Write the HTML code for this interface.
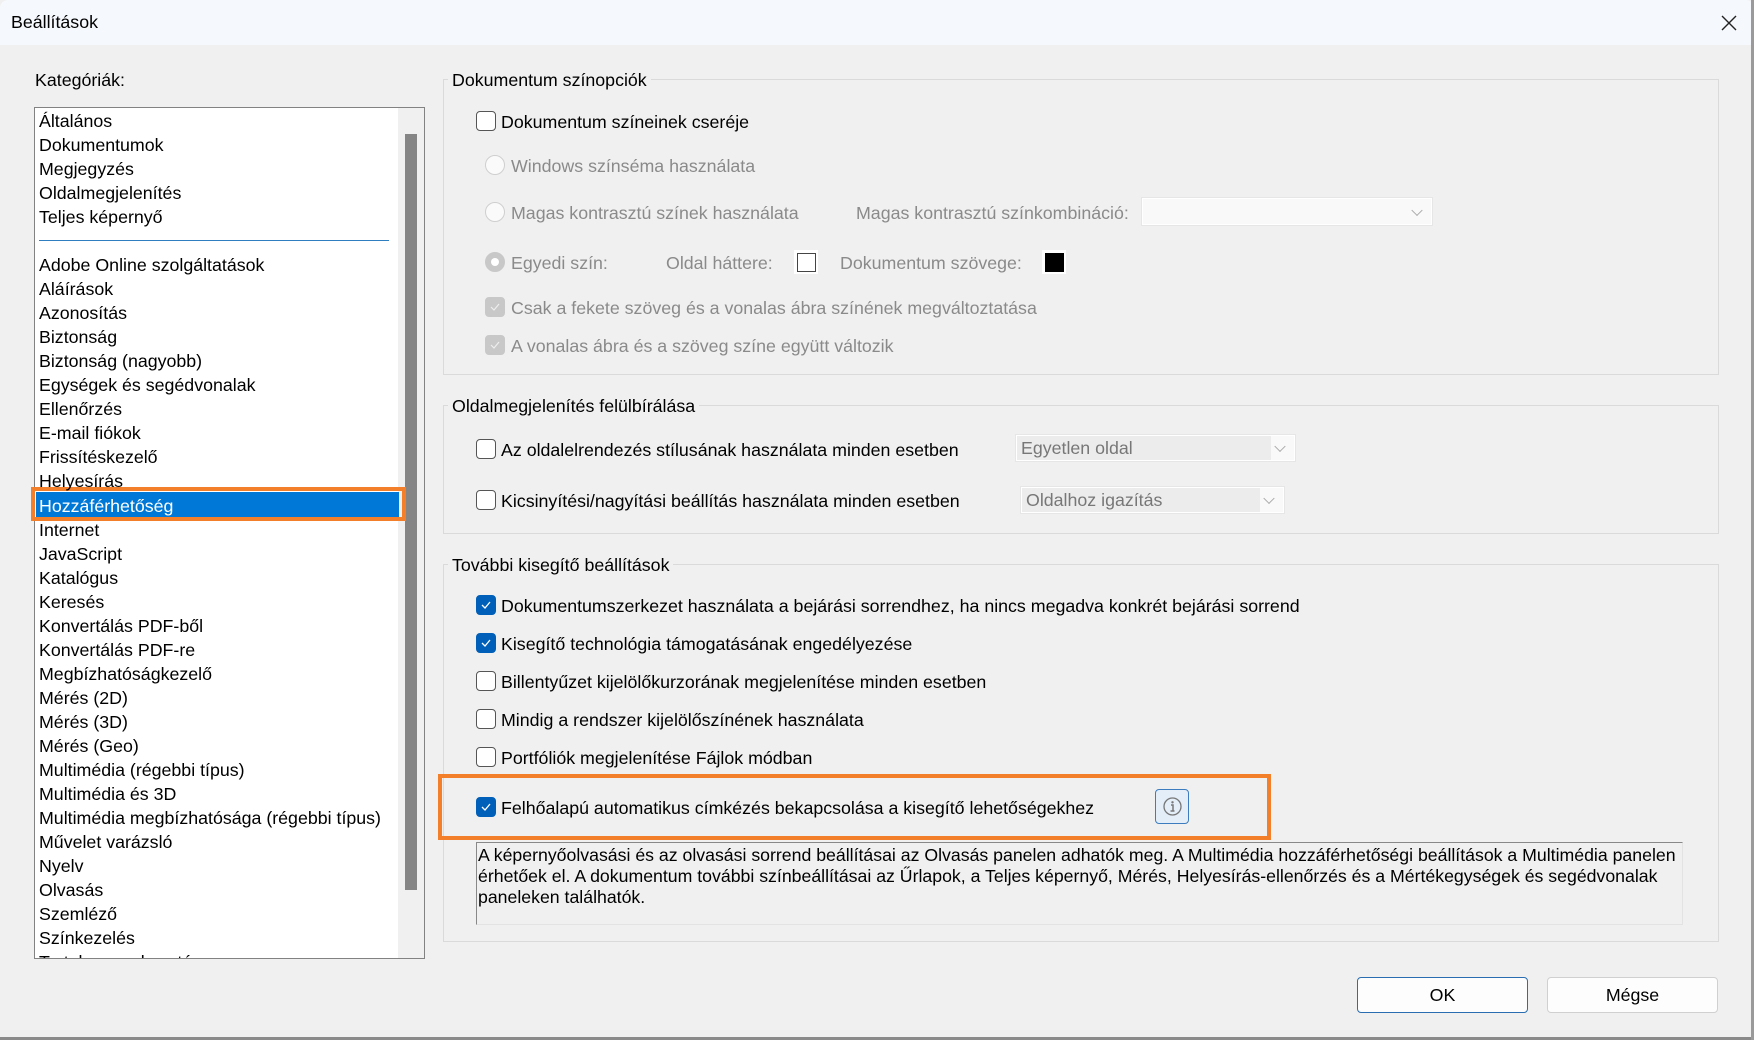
<!DOCTYPE html>
<html><head><meta charset="utf-8"><style>
*{margin:0;padding:0;box-sizing:border-box}
body{width:1754px;height:1040px;overflow:hidden;background:#f0f0f0;font-family:"Liberation Sans",sans-serif;font-size:17.8px;color:#000;position:relative}
.a{position:absolute;white-space:nowrap}
.t{position:absolute;white-space:nowrap;line-height:26px}
.g{color:#8a8a8a}
.cb{position:absolute;width:20px;height:20px;border:1px solid #555;border-radius:4px;background:#fff}
.cb.on{background:#005fb8;border-color:#005fb8}
.cb.dis{background:#c8c8c8;border-color:#c8c8c8}
.cb svg{position:absolute;left:3px;top:3px}
.rd{position:absolute;width:20px;height:20px;border:1px solid #cfcfcf;border-radius:50%;background:#fafafa}
.grp{position:absolute;border:1px solid #dadada}
.lbl{position:absolute;background:#f0f0f0;padding:0 4px;line-height:22px}
.dd{position:absolute;background:#f9f9f9;border:1px solid #fff;box-shadow:0 0 0 1px #e6e6e6}
.dd .ar{position:absolute;right:10px;top:50%;width:8px;height:8px;border-right:1px solid #aaa;border-bottom:1px solid #aaa;transform:translateY(-70%) rotate(45deg)}
.btn{position:absolute;background:#fdfdfd;border:1px solid #d0d0d0;border-radius:4px;text-align:center;line-height:34px}
</style></head><body>
<div class="a" style="left:0;top:0;width:1754px;height:45px;background:#f5f8fc;border-top-left-radius:8px;border-top-right-radius:8px"></div>
<div class="a" style="left:11px;top:12px;font-size:17.8px">Beállítások</div>
<svg class="a" style="left:1720px;top:14px" width="18" height="18"><path d="M2 2L16 16M16 2L2 16" stroke="#222" stroke-width="1.4"/></svg>

<div class="a" style="left:35px;top:70px">Kategóriák:</div>
<div class="a" style="left:34px;top:107px;width:391px;height:852px;background:#fff;border:1px solid #828282;overflow:hidden">
 <div class="a" style="left:363px;top:0;width:27px;height:852px;background:#f0f0f0"></div>
 <div class="a" style="left:370px;top:26px;width:12px;height:756px;background:#858585"></div>
 <div class="a" style="left:4px;top:132px;width:350px;height:1px;background:#2f7fc0"></div>
 <div class="a" style="left:1px;top:384px;width:363px;height:25px;background:#0078d7"></div>
</div>
<div class="a" style="left:31px;top:487px;width:375px;height:34px;border:4px solid #f47f2a"></div>
<div style="position:absolute;left:39px;top:108px">
<div class="t" style="top:0">Általános</div>
<div class="t" style="top:24px">Dokumentumok</div>
<div class="t" style="top:48px">Megjegyzés</div>
<div class="t" style="top:72px">Oldalmegjelenítés</div>
<div class="t" style="top:96px">Teljes képernyő</div>
</div>
<div style="position:absolute;left:39px;top:252px;width:360px;height:706px;overflow:hidden">
<div class="t" style="top:0">Adobe Online szolgáltatások</div>
<div class="t" style="top:24.05px">Aláírások</div>
<div class="t" style="top:48.1px">Azonosítás</div>
<div class="t" style="top:72.15px">Biztonság</div>
<div class="t" style="top:96.2px">Biztonság (nagyobb)</div>
<div class="t" style="top:120.25px">Egységek és segédvonalak</div>
<div class="t" style="top:144.3px">Ellenőrzés</div>
<div class="t" style="top:168.35px">E-mail fiókok</div>
<div class="t" style="top:192.4px">Frissítéskezelő</div>
<div class="t" style="top:216.45px">Helyesírás</div>
<div class="t" style="top:240.5px;color:#fff">Hozzáférhetőség</div>
<div class="t" style="top:264.55px">Internet</div>
<div class="t" style="top:288.6px">JavaScript</div>
<div class="t" style="top:312.65px">Katalógus</div>
<div class="t" style="top:336.7px">Keresés</div>
<div class="t" style="top:360.75px">Konvertálás PDF-ből</div>
<div class="t" style="top:384.8px">Konvertálás PDF-re</div>
<div class="t" style="top:408.85px">Megbízhatóságkezelő</div>
<div class="t" style="top:432.9px">Mérés (2D)</div>
<div class="t" style="top:456.95px">Mérés (3D)</div>
<div class="t" style="top:481px">Mérés (Geo)</div>
<div class="t" style="top:505.05px">Multimédia (régebbi típus)</div>
<div class="t" style="top:529.1px">Multimédia és 3D</div>
<div class="t" style="top:553.15px">Multimédia megbízhatósága (régebbi típus)</div>
<div class="t" style="top:577.2px">Művelet varázsló</div>
<div class="t" style="top:601.25px">Nyelv</div>
<div class="t" style="top:625.3px">Olvasás</div>
<div class="t" style="top:649.35px">Szemléző</div>
<div class="t" style="top:673.4px">Színkezelés</div>
<div class="t" style="top:697.45px">Tartalomszerkesztés</div>
</div>

<!-- group 1 -->
<div class="grp" style="left:443px;top:79px;width:1276px;height:296px"></div>
<div class="lbl" style="left:448px;top:69px">Dokumentum színopciók</div>
<div class="cb" style="left:476px;top:111px"></div>
<div class="t" style="left:501px;top:109px">Dokumentum színeinek cseréje</div>
<div class="rd" style="left:485px;top:155px"></div>
<div class="t g" style="left:511px;top:153px">Windows színséma használata</div>
<div class="rd" style="left:485px;top:202px"></div>
<div class="t g" style="left:511px;top:200px">Magas kontrasztú színek használata</div>
<div class="t g" style="left:856px;top:200px">Magas kontrasztú színkombináció:</div>
<div class="dd" style="left:1142px;top:198px;width:290px;height:27px"><div class="ar"></div></div>
<div class="rd" style="left:485px;top:252px;background:#c8c8c8;border-color:#c8c8c8"><div class="a" style="left:5px;top:5px;width:8px;height:8px;border-radius:50%;background:#fff"></div></div>
<div class="t g" style="left:511px;top:250px">Egyedi szín:</div>
<div class="t g" style="left:666px;top:250px">Oldal háttere:</div>
<div class="a" style="left:794px;top:250px;width:24px;height:24px;background:#fff"></div>
<div class="a" style="left:797px;top:253px;width:19px;height:19px;border:1.5px solid #444"></div>
<div class="t g" style="left:840px;top:250px">Dokumentum szövege:</div>
<div class="a" style="left:1042px;top:250px;width:24px;height:24px;background:#fff"></div>
<div class="a" style="left:1045px;top:253px;width:19px;height:19px;background:#000"></div>
<div class="cb dis" style="left:485px;top:297px"><svg width="12" height="12"><path d="M2 6l3 3 5-6" stroke="#eee" fill="none" stroke-width="1.2"/></svg></div>
<div class="t g" style="left:511px;top:295px">Csak a fekete szöveg és a vonalas ábra színének megváltoztatása</div>
<div class="cb dis" style="left:485px;top:335px"><svg width="12" height="12"><path d="M2 6l3 3 5-6" stroke="#eee" fill="none" stroke-width="1.2"/></svg></div>
<div class="t g" style="left:511px;top:333px">A vonalas ábra és a szöveg színe együtt változik</div>

<!-- group 2 -->
<div class="grp" style="left:443px;top:405px;width:1276px;height:129px"></div>
<div class="lbl" style="left:448px;top:395px">Oldalmegjelenítés felülbírálása</div>
<div class="cb" style="left:476px;top:439px"></div>
<div class="t" style="left:501px;top:437px">Az oldalelrendezés stílusának használata minden esetben</div>
<div class="dd" style="left:1016px;top:435px;width:279px;height:26px;background:#ececec"><div class="a" style="right:0;top:0;width:23px;height:24px;background:#f9f9f9"></div><div class="ar"></div><div class="t g" style="left:4px;top:-1px;color:#777">Egyetlen oldal</div></div>
<div class="cb" style="left:476px;top:490px"></div>
<div class="t" style="left:501px;top:488px">Kicsinyítési/nagyítási beállítás használata minden esetben</div>
<div class="dd" style="left:1021px;top:487px;width:263px;height:26px;background:#ececec"><div class="a" style="right:0;top:0;width:23px;height:24px;background:#f9f9f9"></div><div class="ar"></div><div class="t g" style="left:4px;top:-1px;color:#777">Oldalhoz igazítás</div></div>

<!-- group 3 -->
<div class="grp" style="left:443px;top:564px;width:1276px;height:378px"></div>
<div class="lbl" style="left:448px;top:554px">További kisegítő beállítások</div>
<div class="cb on" style="left:476px;top:595px"><svg width="12" height="12"><path d="M2 6l3 3 5-6" stroke="#fff" fill="none" stroke-width="1.3"/></svg></div>
<div class="t" style="left:501px;top:593px">Dokumentumszerkezet használata a bejárási sorrendhez, ha nincs megadva konkrét bejárási sorrend</div>
<div class="cb on" style="left:476px;top:633px"><svg width="12" height="12"><path d="M2 6l3 3 5-6" stroke="#fff" fill="none" stroke-width="1.3"/></svg></div>
<div class="t" style="left:501px;top:631px">Kisegítő technológia támogatásának engedélyezése</div>
<div class="cb" style="left:476px;top:671px"></div>
<div class="t" style="left:501px;top:669px">Billentyűzet kijelölőkurzorának megjelenítése minden esetben</div>
<div class="cb" style="left:476px;top:709px"></div>
<div class="t" style="left:501px;top:707px">Mindig a rendszer kijelölőszínének használata</div>
<div class="cb" style="left:476px;top:747px"></div>
<div class="t" style="left:501px;top:745px">Portfóliók megjelenítése Fájlok módban</div>
<div class="a" style="left:438px;top:774px;width:833px;height:66px;border:4px solid #f47f2a"></div>
<div class="cb on" style="left:476px;top:797px"><svg width="12" height="12"><path d="M2 6l3 3 5-6" stroke="#fff" fill="none" stroke-width="1.3"/></svg></div>
<div class="t" style="left:501px;top:795px">Felhőalapú automatikus címkézés bekapcsolása a kisegítő lehetőségekhez</div>
<div class="a" style="left:1155px;top:789px;width:34px;height:35px;border:1px solid #3d7dbf;border-radius:4px;background:#e3eef9"></div>
<svg class="a" style="left:1162px;top:796px" width="21" height="21"><circle cx="10.5" cy="10.5" r="8.5" stroke="#777" stroke-width="1.3" fill="none"/><circle cx="10.5" cy="6.3" r="1.2" fill="#777"/><path d="M9 9h2v6M8.5 15h4" stroke="#777" stroke-width="1.5" fill="none"/></svg>
<div class="a" style="left:476px;top:842px;width:1207px;height:83px;border-left:1px solid #888;border-top:1px solid #888;border-bottom:1px solid #e3e3e3;border-right:1px solid #e3e3e3;background:#f0f0f0"></div>
<div class="a" style="left:478px;top:845px;font-size:17.7px;line-height:21px">A képernyőolvasási és az olvasási sorrend beállításai az Olvasás panelen adhatók meg. A Multimédia hozzáférhetőségi beállítások a Multimédia panelen<br>érhetőek el. A dokumentum további színbeállításai az Űrlapok, a Teljes képernyő, Mérés, Helyesírás-ellenőrzés és a Mértékegységek és segédvonalak<br>paneleken találhatók.</div>

<div class="btn" style="left:1357px;top:977px;width:171px;height:36px;border-color:#2a6db0">OK</div>
<div class="btn" style="left:1547px;top:977px;width:171px;height:36px">Mégse</div>
<div class="a" style="left:0;top:1037px;width:1754px;height:3px;background:#8a8a8a"></div>
<div class="a" style="left:1751px;top:0;width:3px;height:1040px;background:#9a9a9a"></div>
</body></html>
